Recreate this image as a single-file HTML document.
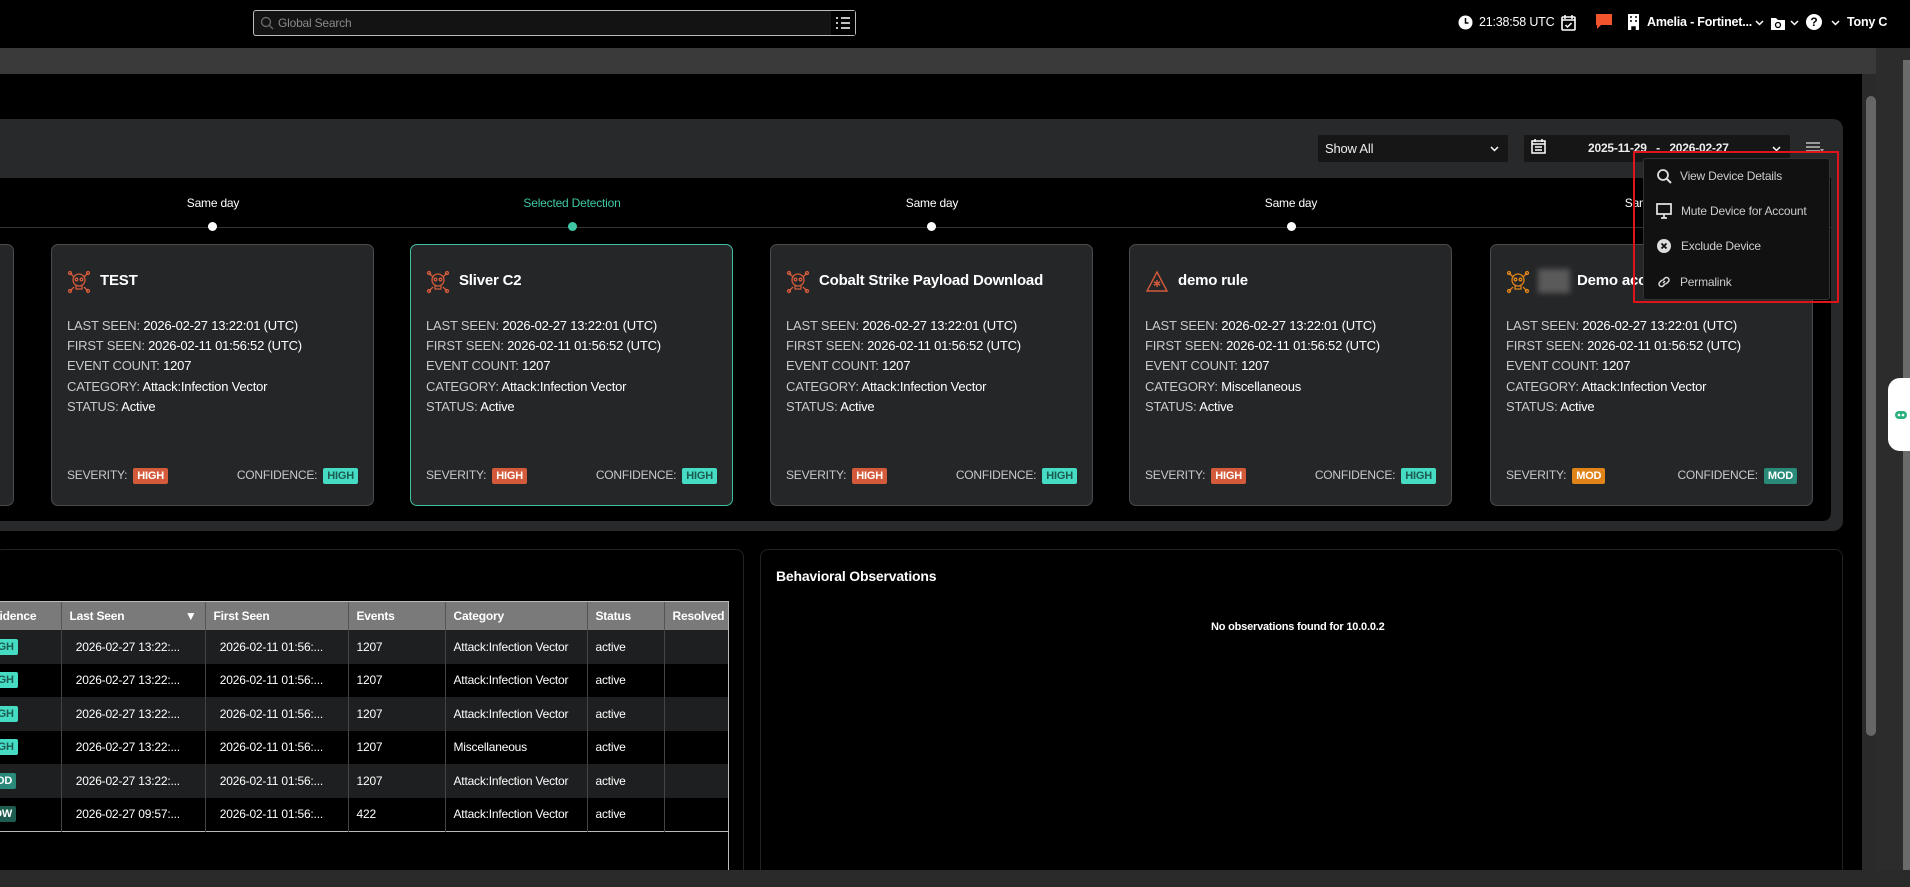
<!DOCTYPE html>
<html><head><meta charset="utf-8"><style>
*{margin:0;padding:0;box-sizing:border-box}
body{width:1910px;height:887px;background:#000;font-family:"Liberation Sans",sans-serif;color:#fff;position:relative;overflow:hidden;letter-spacing:-0.2px}
.abs{position:absolute}
.top{left:0;top:0;width:1880px;height:48px;background:#000}
.search{left:253px;top:10px;width:603px;height:26px;border:1px solid #bbb;border-radius:3px;background:#131313}
.search span{position:absolute;left:24px;top:5px;font-size:12px;color:#8a8a8a}
.gbar{left:0;top:48px;width:1876px;height:26px;background:#3a3a3a}
.panel{left:0;top:119px;width:1843px;height:412px;background:#28292b;border-radius:0 10px 10px 0}
.inner{left:0;top:178px;width:1831px;height:343px;background:#000;border-radius:0 0 8px 0}
.dd{background:#161616;border-radius:2px;height:27px;font-size:13px;color:#eee}
.card{width:323px;height:262px;top:244px;background:#252628;border:1px solid #4a4b4d;border-radius:7px}
.card .t{position:absolute;left:48px;top:27px;font-size:15px;font-weight:bold}
.card .ic{position:absolute;left:15px;top:25px}
.card .l{position:absolute;left:15px;font-size:13px;color:#c9c9c9}
.card .l b{font-weight:normal;color:#fff}
.sev{position:absolute;top:223px;font-size:12px;color:#c9c9c9}
.badge{display:inline-block;padding:2px 4px;font-size:11px;font-weight:bold;border-radius:2px;margin-left:6px;vertical-align:middle}
.bh{background:#d35b3b;color:#fff}.ch{background:#46dcc4;color:#1d5b52}.bm{background:#e08419;color:#fff}.cm{background:#2a8a79;color:#fff}
.tl{font-size:12px;top:196px;transform:translateX(-50%)}
.dot{width:9px;height:9px;border-radius:50%;background:#fff;top:222px}
.menu{left:1643px;top:158px;width:187px;height:142px;background:#111;border:1px solid #333;border-radius:3px}
.menu div{position:absolute;left:36px;font-size:12px;color:#ccc}
table{border-collapse:collapse;font-size:12px;table-layout:fixed}
td,th{height:33.5px;padding:0 8px;text-align:left;white-space:nowrap;overflow:hidden;border-right:1px solid #444}
th{background:#7a7a7a;height:28px;font-weight:bold;border-right:1px solid #555}
tr:nth-child(even) td{background:#1e1f20}
</style></head><body>
<div class="abs top"></div>
<div class="abs search"><svg class="abs" style="left:6px;top:5px" width="14" height="14" viewBox="0 0 14 14"><circle cx="6" cy="6" r="4.5" stroke="#666" stroke-width="1.4" fill="none"/><path d="M9.5 9.5L13 13" stroke="#666" stroke-width="1.4"/></svg><span>Global Search</span>
<div class="abs" style="right:0;top:0;width:24px;height:24px;background:#000"><svg width="24" height="24"><path d="M5 7h2M5 12h2M5 17h2M10 7h9M10 12h9M10 17h9" stroke="#ddd" stroke-width="1.8"/></svg></div></div>
<svg class="abs" style="left:1458px;top:15px" width="15" height="15"><circle cx="7.5" cy="7.5" r="7" fill="#fff"/><path d="M7.5 3v5h3" stroke="#000" stroke-width="1.5" fill="none"/></svg>
<div class="abs" style="left:1479px;top:15px;font-size:12.5px">21:38:58 UTC</div>
<svg class="abs" style="left:1561px;top:14px" width="15" height="17"><rect x="1" y="3" width="13" height="13" rx="1" fill="none" stroke="#fff" stroke-width="1.6"/><path d="M4 1v4M11 1v4M1 6h13M4.5 11l2 2 4-4" stroke="#fff" stroke-width="1.5" fill="none"/></svg>
<svg class="abs" style="left:1595px;top:13px" width="18" height="17"><path d="M1 1h16v11H6l-4 4v-4H1z" fill="#f2542d"/></svg>
<svg class="abs" style="left:1627px;top:13px" width="13" height="18"><rect x="1" y="1" width="11" height="16" fill="#fff"/><path d="M3 4h2M8 4h2M3 8h2M8 8h2M5 14h3v3H5z" stroke="#000" stroke-width="1.5"/></svg>
<div class="abs" style="left:1647px;top:15px;font-size:12.5px;font-weight:bold">Amelia - Fortinet...</div>
<svg class="abs" style="left:1755px;top:20px" width="9" height="6"><path d="M1 1l3.5 3.5L8 1" stroke="#fff" stroke-width="1.5" fill="none"/></svg>
<svg class="abs" style="left:1770px;top:15px" width="16" height="16"><path d="M1 3h5l2 2h7v10H1z" fill="#fff"/><circle cx="8" cy="10" r="2.5" stroke="#000" stroke-width="1.3" fill="none"/></svg>
<svg class="abs" style="left:1790px;top:20px" width="9" height="6"><path d="M1 1l3.5 3.5L8 1" stroke="#fff" stroke-width="1.5" fill="none"/></svg>
<div class="abs" style="left:1806px;top:14px;width:16px;height:16px;border-radius:50%;background:#fff;color:#000;font-size:12px;font-weight:bold;text-align:center;line-height:16px">?</div>
<svg class="abs" style="left:1831px;top:20px" width="9" height="6"><path d="M1 1l3.5 3.5L8 1" stroke="#fff" stroke-width="1.5" fill="none"/></svg>
<div class="abs" style="left:1847px;top:15px;font-size:12.5px;font-weight:bold">Tony C</div>
<div class="abs gbar"></div>
<div class="abs" style="left:1862px;top:74px;width:14px;height:796px;background:#2a2a2a"></div>
<div class="abs" style="left:1866px;top:96px;width:10px;height:640px;background:#666;border-radius:5px"></div>
<div class="abs" style="left:1876px;top:48px;width:34px;height:839px;background:#2c2c2c"></div>
<div class="abs" style="left:1903px;top:60px;width:7px;height:810px;background:#6b6b6b"></div>
<div class="abs" style="left:1888px;top:378px;width:22px;height:73px;background:#fff;border-radius:12px 0 0 12px"></div>
<svg class="abs" style="left:1894px;top:408px" width="14" height="12"><rect x="1" y="3" width="12" height="8" rx="4" fill="#2eb07e"/><circle cx="5" cy="7" r="1.3" fill="#fff"/><circle cx="9" cy="7" r="1.3" fill="#fff"/></svg>
<div class="abs panel"></div>
<div class="abs inner"></div>
<div class="abs dd" style="left:1318px;top:135px;width:190px"><span class="abs" style="left:7px;top:6px">Show All</span><svg class="abs" style="right:9px;top:11px" width="9" height="6"><path d="M1 1l3.5 3.5L8 1" stroke="#fff" stroke-width="1.5" fill="none"/></svg></div>
<div class="abs dd" style="left:1524px;top:135px;width:266px"><svg class="abs" style="left:7px;top:3px" width="15" height="16"><rect x="1" y="3" width="13" height="12" fill="none" stroke="#fff" stroke-width="1.5"/><path d="M1 6h13M4 1v3M11 1v3M4 9h7M4 12h7" stroke="#fff" stroke-width="1.5"/></svg><span class="abs" style="left:64px;top:6px;font-size:12px;font-weight:bold">2025-11-29&nbsp;&nbsp; - &nbsp;&nbsp;2026-02-27</span><svg class="abs" style="right:9px;top:11px" width="9" height="6"><path d="M1 1l3.5 3.5L8 1" stroke="#fff" stroke-width="1.5" fill="none"/></svg></div>
<svg class="abs" style="left:1806px;top:142px" width="18" height="12"><path d="M0 1h14M0 5h14M0 9h14" stroke="#aaa" stroke-width="1.8"/><path d="M14 7l2 3 2-3z" fill="#aaa"/></svg>
<div class="abs" style="left:0;top:227px;width:1831px;height:1px;background:#333"></div>
<div class="abs tl" style="left:213px">Same day</div><div class="abs dot" style="left:208px"></div>
<div class="abs tl" style="left:572px;color:#3ec7a4">Selected Detection</div><div class="abs dot" style="left:568px;background:#3ec7a4"></div>
<div class="abs tl" style="left:932px">Same day</div><div class="abs dot" style="left:927px"></div>
<div class="abs tl" style="left:1291px">Same day</div><div class="abs dot" style="left:1287px"></div>
<div class="abs tl" style="left:1651px">Same day</div>
<div class="abs" style="left:-10px;top:244px;width:24px;height:262px;background:#252628;border:1px solid #4a4b4d;border-radius:7px"></div>

<div class="abs card" style="left:51px"><svg class="ic" width="24" height="24" viewBox="0 0 24 24" fill="none" stroke="#d35b3b" stroke-width="1.3"><circle cx="12" cy="10" r="6"/><circle cx="9.5" cy="9.5" r="1.3"/><circle cx="14.5" cy="9.5" r="1.3"/><path d="M9 16v3h6v-3M3 3l4 4M21 3l-4 4M3 21l4-4M21 21l-4-4"/><circle cx="3" cy="3" r="1.5"/><circle cx="21" cy="3" r="1.5"/><circle cx="3" cy="21" r="1.5"/><circle cx="21" cy="21" r="1.5"/></svg><div class="t">TEST</div>
<div class="l" style="top:73px">LAST SEEN: <b>2026-02-27 13:22:01 (UTC)</b></div><div class="l" style="top:93px">FIRST SEEN: <b>2026-02-11 01:56:52 (UTC)</b></div><div class="l" style="top:113px">EVENT COUNT: <b>1207</b></div><div class="l" style="top:134px">CATEGORY: <b>Attack:Infection Vector</b></div><div class="l" style="top:154px">STATUS: <b>Active</b></div>
<div class="sev" style="left:15px">SEVERITY:<span class="badge bh">HIGH</span></div><div class="sev" style="right:15px">CONFIDENCE:<span class="badge ch">HIGH</span></div></div>

<div class="abs card" style="left:410px;border-color:#3fbfa3"><svg class="ic" width="24" height="24" viewBox="0 0 24 24" fill="none" stroke="#d35b3b" stroke-width="1.3"><circle cx="12" cy="10" r="6"/><circle cx="9.5" cy="9.5" r="1.3"/><circle cx="14.5" cy="9.5" r="1.3"/><path d="M9 16v3h6v-3M3 3l4 4M21 3l-4 4M3 21l4-4M21 21l-4-4"/><circle cx="3" cy="3" r="1.5"/><circle cx="21" cy="3" r="1.5"/><circle cx="3" cy="21" r="1.5"/><circle cx="21" cy="21" r="1.5"/></svg><div class="t">Sliver C2</div>
<div class="l" style="top:73px">LAST SEEN: <b>2026-02-27 13:22:01 (UTC)</b></div><div class="l" style="top:93px">FIRST SEEN: <b>2026-02-11 01:56:52 (UTC)</b></div><div class="l" style="top:113px">EVENT COUNT: <b>1207</b></div><div class="l" style="top:134px">CATEGORY: <b>Attack:Infection Vector</b></div><div class="l" style="top:154px">STATUS: <b>Active</b></div>
<div class="sev" style="left:15px">SEVERITY:<span class="badge bh">HIGH</span></div><div class="sev" style="right:15px">CONFIDENCE:<span class="badge ch">HIGH</span></div></div>

<div class="abs card" style="left:770px"><svg class="ic" width="24" height="24" viewBox="0 0 24 24" fill="none" stroke="#d35b3b" stroke-width="1.3"><circle cx="12" cy="10" r="6"/><circle cx="9.5" cy="9.5" r="1.3"/><circle cx="14.5" cy="9.5" r="1.3"/><path d="M9 16v3h6v-3M3 3l4 4M21 3l-4 4M3 21l4-4M21 21l-4-4"/><circle cx="3" cy="3" r="1.5"/><circle cx="21" cy="3" r="1.5"/><circle cx="3" cy="21" r="1.5"/><circle cx="21" cy="21" r="1.5"/></svg><div class="t">Cobalt Strike Payload Download</div>
<div class="l" style="top:73px">LAST SEEN: <b>2026-02-27 13:22:01 (UTC)</b></div><div class="l" style="top:93px">FIRST SEEN: <b>2026-02-11 01:56:52 (UTC)</b></div><div class="l" style="top:113px">EVENT COUNT: <b>1207</b></div><div class="l" style="top:134px">CATEGORY: <b>Attack:Infection Vector</b></div><div class="l" style="top:154px">STATUS: <b>Active</b></div>
<div class="sev" style="left:15px">SEVERITY:<span class="badge bh">HIGH</span></div><div class="sev" style="right:15px">CONFIDENCE:<span class="badge ch">HIGH</span></div></div>

<div class="abs card" style="left:1129px"><svg class="ic" width="24" height="24" viewBox="0 0 24 24" fill="none" stroke="#d35b3b" stroke-width="1.4"><path d="M12 2L22 21H2z"/><path d="M12 10v7M8.8 11.8l6.4 3.4M15.2 11.8l-6.4 3.4"/></svg><div class="t">demo rule</div>
<div class="l" style="top:73px">LAST SEEN: <b>2026-02-27 13:22:01 (UTC)</b></div><div class="l" style="top:93px">FIRST SEEN: <b>2026-02-11 01:56:52 (UTC)</b></div><div class="l" style="top:113px">EVENT COUNT: <b>1207</b></div><div class="l" style="top:134px">CATEGORY: <b>Miscellaneous</b></div><div class="l" style="top:154px">STATUS: <b>Active</b></div>
<div class="sev" style="left:15px">SEVERITY:<span class="badge bh">HIGH</span></div><div class="sev" style="right:15px">CONFIDENCE:<span class="badge ch">HIGH</span></div></div>

<div class="abs card" style="left:1490px"><svg class="ic" width="24" height="24" viewBox="0 0 24 24" fill="none" stroke="#e08419" stroke-width="1.3"><circle cx="12" cy="10" r="6"/><circle cx="9.5" cy="9.5" r="1.3"/><circle cx="14.5" cy="9.5" r="1.3"/><path d="M9 16v3h6v-3M3 3l4 4M21 3l-4 4M3 21l4-4M21 21l-4-4"/><circle cx="3" cy="3" r="1.5"/><circle cx="21" cy="3" r="1.5"/><circle cx="3" cy="21" r="1.5"/><circle cx="21" cy="21" r="1.5"/></svg><div class="abs" style="left:47px;top:24px;width:32px;height:24px;background:#5a5a5a;filter:blur(3px)"></div><div class="t" style="left:86px">Demo acc</div>
<div class="l" style="top:73px">LAST SEEN: <b>2026-02-27 13:22:01 (UTC)</b></div><div class="l" style="top:93px">FIRST SEEN: <b>2026-02-11 01:56:52 (UTC)</b></div><div class="l" style="top:113px">EVENT COUNT: <b>1207</b></div><div class="l" style="top:134px">CATEGORY: <b>Attack:Infection Vector</b></div><div class="l" style="top:154px">STATUS: <b>Active</b></div>
<div class="sev" style="left:15px">SEVERITY:<span class="badge bm">MOD</span></div><div class="sev" style="right:15px">CONFIDENCE:<span class="badge cm">MOD</span></div></div>

<div class="abs" style="left:1633px;top:151px;width:206px;height:152px;border:2px solid #e0151b"></div>
<div class="abs menu">
<svg class="abs" style="left:12px;top:9px" width="16" height="16"><circle cx="7" cy="7" r="5" stroke="#ddd" stroke-width="1.8" fill="none"/><path d="M10.5 10.5L15 15" stroke="#ddd" stroke-width="2"/></svg><div style="top:10px">View Device Details</div>
<svg class="abs" style="left:12px;top:44px" width="16" height="16"><rect x="1" y="1" width="14" height="10" stroke="#ddd" stroke-width="1.8" fill="none"/><path d="M5 15h6M8 11v4" stroke="#ddd" stroke-width="1.8"/></svg><div style="top:45px;left:37px">Mute Device for Account</div>
<svg class="abs" style="left:12px;top:79px" width="16" height="16"><circle cx="8" cy="8" r="7" fill="#ddd"/><path d="M5.5 5.5l5 5M10.5 5.5l-5 5" stroke="#111" stroke-width="1.8"/></svg><div style="top:80px;left:37px">Exclude Device</div>
<svg class="abs" style="left:12px;top:115px" width="16" height="16"><path d="M7 9l2-2M6 6L3.5 8.5a2.5 2.5 0 003.5 3.5L9.5 9.5M10 10l2.5-2.5a2.5 2.5 0 00-3.5-3.5L6.5 6.5" stroke="#ddd" stroke-width="1.5" fill="none"/></svg><div style="top:116px">Permalink</div>
</div>

<div class="abs" style="left:-5px;top:549px;width:749px;height:330px;border:1px solid #222;border-radius:8px"></div>
<div class="abs" style="left:760px;top:549px;width:1083px;height:330px;border:1px solid #222;border-radius:8px"></div>
<div class="abs" style="left:776px;top:568px;font-size:14px;font-weight:bold">Behavioral Observations</div>
<div class="abs" style="left:1211px;top:621px;font-size:11px;font-weight:bold">No observations found for 10.0.0.2</div>
<div class="abs" style="left:0;top:601px;width:729px;height:270px;border-right:1px solid #bbb;border-top:1px solid #bbb;overflow:hidden">
<table style="margin-left:-35px;width:820px">
<colgroup><col style="width:96px"><col style="width:144px"><col style="width:143px"><col style="width:97px"><col style="width:142px"><col style="width:77px"><col style="width:121px"></colgroup>
<tr><th>Confidence</th><th>Last Seen <span style="float:right">▼</span></th><th>First Seen</th><th>Events</th><th>Category</th><th>Status</th><th>Resolved By</th></tr>
<tr><td style="padding-left:12px"><span class="badge ch">HIGH</span></td><td>&nbsp; 2026-02-27 13:22:...</td><td>&nbsp; 2026-02-11 01:56:...</td><td>1207</td><td>Attack:Infection Vector</td><td>active</td><td></td></tr>
<tr><td style="padding-left:12px"><span class="badge ch">HIGH</span></td><td>&nbsp; 2026-02-27 13:22:...</td><td>&nbsp; 2026-02-11 01:56:...</td><td>1207</td><td>Attack:Infection Vector</td><td>active</td><td></td></tr>
<tr><td style="padding-left:12px"><span class="badge ch">HIGH</span></td><td>&nbsp; 2026-02-27 13:22:...</td><td>&nbsp; 2026-02-11 01:56:...</td><td>1207</td><td>Attack:Infection Vector</td><td>active</td><td></td></tr>
<tr><td style="padding-left:12px"><span class="badge ch">HIGH</span></td><td>&nbsp; 2026-02-27 13:22:...</td><td>&nbsp; 2026-02-11 01:56:...</td><td>1207</td><td>Miscellaneous</td><td>active</td><td></td></tr>
<tr><td style="padding-left:12px"><span class="badge cm">MOD</span></td><td>&nbsp; 2026-02-27 13:22:...</td><td>&nbsp; 2026-02-11 01:56:...</td><td>1207</td><td>Attack:Infection Vector</td><td>active</td><td></td></tr>
<tr style="border-bottom:1px solid #bbb"><td style="padding-left:12px"><span class="badge" style="background:#1f5c50">LOW</span></td><td>&nbsp; 2026-02-27 09:57:...</td><td>&nbsp; 2026-02-11 01:56:...</td><td>422</td><td>Attack:Infection Vector</td><td>active</td><td></td></tr>
</table></div>
<div class="abs" style="left:0;top:870px;width:1910px;height:17px;background:#2a2a2a"></div>
</body></html>
